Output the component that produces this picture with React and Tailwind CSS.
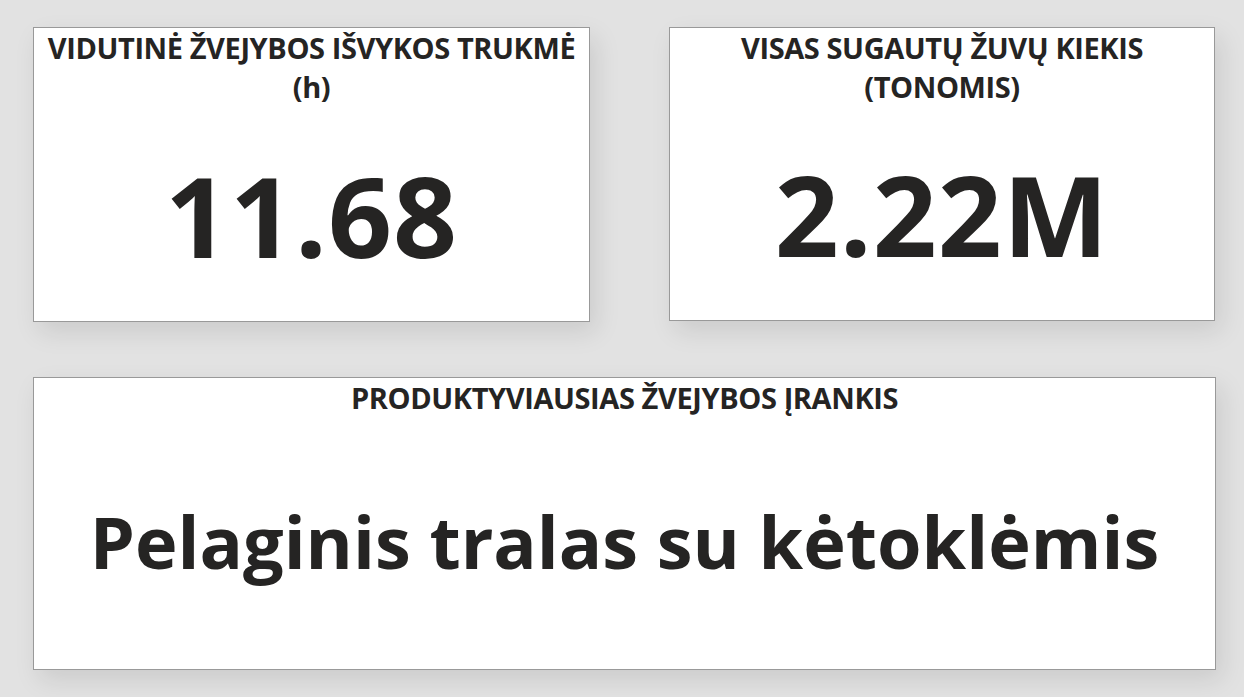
const font = { fontFamily: '"Open Sans", "Noto Sans", sans-serif' };

function Card({ title, value, className, valueClass }) {
  return (
    <div
      className={`flex flex-col bg-white border border-[#999999] shadow-[6px_10px_24px_rgba(0,0,0,0.10)] ${className}`}
    >
      <div className="px-2 pt-0 text-center text-[29px] leading-[39px] font-bold text-[#252423] tracking-[-0.4px]">
        {title}
      </div>
      <div className="flex flex-1 items-center justify-center">
        <span className={`font-bold text-[#252423] ${valueClass}`}>{value}</span>
      </div>
    </div>
  );
}

export default function App() {
  return (
    <div className="w-[1244px] h-[697px] bg-[#e2e2e2] pt-[27px] pl-[33px] pr-[28px]" style={font}>
      <div className="flex gap-[79px]">
        <Card
          title={<>VIDUTINĖ ŽVEJYBOS IŠVYKOS TRUKMĖ<br />(h)</>}
          value="11.68"
          className="w-[557px] h-[295px]"
          valueClass="text-[112px] leading-none tracking-[1px] pt-[2px]"
        />
        <Card
          title={<>VISAS SUGAUTŲ ŽUVŲ KIEKIS<br />(TONOMIS)</>}
          value="2.22M"
          className="w-[546px] h-[294px]"
          valueClass="text-[112px] leading-none tracking-[1px] pt-[2px]"
        />
      </div>
      <Card
        title="PRODUKTYVIAUSIAS ŽVEJYBOS ĮRANKIS"
        value="Pelaginis tralas su kėtoklėmis"
        className="mt-[55px] w-[1183px] h-[293px]"
        valueClass="text-[72px] leading-none pb-[4px]"
      />
    </div>
  );
}
